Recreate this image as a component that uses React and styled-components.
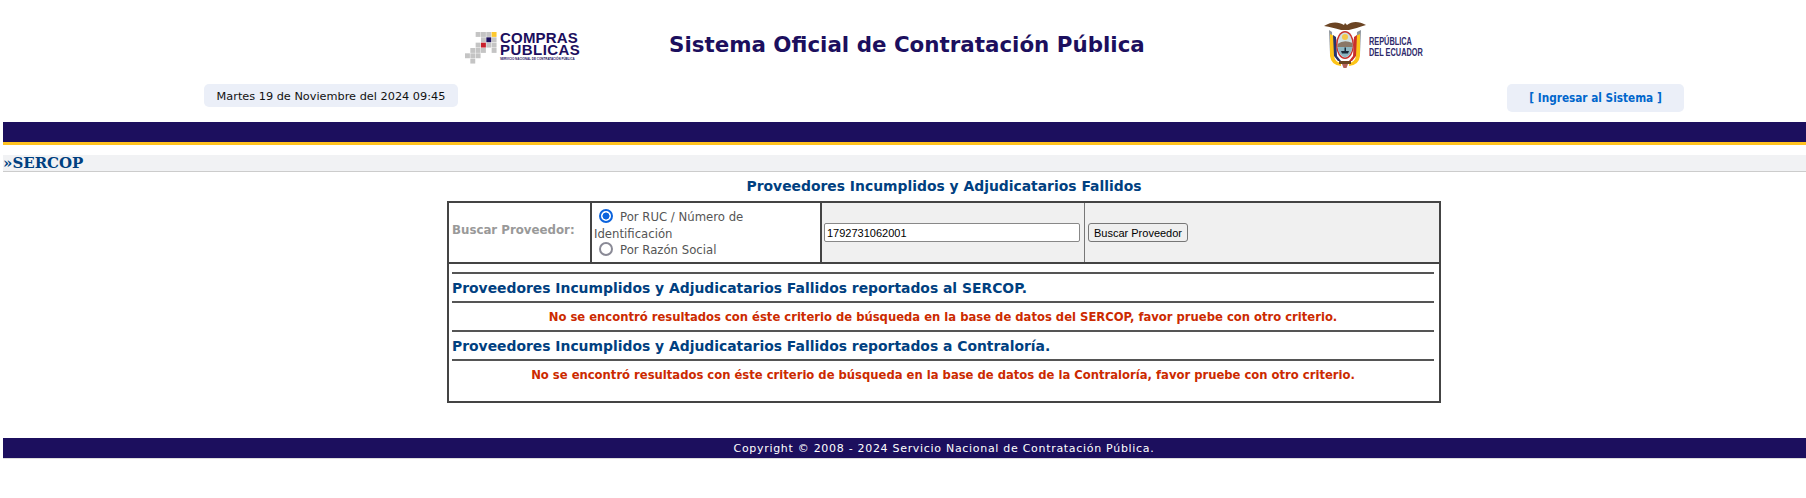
import React from "react";
import styled, { createGlobalStyle } from "styled-components";

const GlobalStyle = createGlobalStyle`
  html, body {
    margin: 0;
    padding: 0;
    background: #fff;
  }
  body {
    font-family: "DejaVu Sans", Verdana, sans-serif;
    overflow: hidden;
  }
`;

const Page = styled.div`
  margin-left: 3px;
`;

const TopRow = styled.div`
  display: grid;
  grid-template-columns: 666px 655px 1fr;
  height: 84px;
`;

const LogoCell = styled.div`
  display: flex;
  align-items: flex-start;
  padding-left: ${(props) => props.$inset || 0}px;
  padding-top: ${(props) => props.$top || 0}px;
`;

const LogoText = styled.div`
  margin-left: 3px;
  font-family: "Liberation Sans", Arial, sans-serif;
  font-weight: bold;
  color: #1c0f5e;
  white-space: nowrap;
`;

const LogoWord = styled.div`
  font-size: 15px;
  line-height: 12px;
  letter-spacing: ${(props) => props.$spacing}px;
`;

const LogoTagline = styled.div`
  font-size: 3px;
  line-height: 6px;
`;

const CrestText = styled.div`
  margin-left: 3px;
  padding-top: 16px;
  font-family: "Liberation Sans", Arial, sans-serif;
  font-size: 10.5px;
  font-weight: bold;
  line-height: 11px;
  color: #2e2a6b;
  white-space: nowrap;
  transform: scaleX(0.7);
  transform-origin: left top;
`;

const SiteTitle = styled.h1`
  margin: 0;
  padding-top: 29px;
  font-size: 21.4px;
  line-height: 32px;
  font-weight: bold;
  color: #1c0f5e;
  white-space: nowrap;
`;

const InfoRow = styled.div`
  display: flex;
  justify-content: space-between;
  align-items: flex-start;
  height: 38px;
  padding: 0 122px 0 201px;
`;

const DatePill = styled.div`
  width: 254px;
  height: 23px;
  box-sizing: border-box;
  background: #ebeff8;
  border-radius: 5px;
  font-size: 11.3px;
  line-height: 25px;
  text-align: center;
  color: #111;
`;

const LoginPill = styled.a`
  display: block;
  width: 177px;
  height: 28px;
  background: #ebeff8;
  border-radius: 5px;
  font-family: "DejaVu Sans Condensed", "DejaVu Sans", sans-serif;
  font-stretch: condensed;
  font-size: 11.7px;
  font-weight: bold;
  line-height: 28px;
  text-align: center;
  color: #0066cc;
  text-decoration: none;
`;

const Band = styled.div`
  height: 20px;
  background: #1c0f5e;
  border-bottom: 3px solid #ffc220;
`;

const SectionBar = styled.div`
  margin-top: 10px;
  height: 16px;
  background: #f1f2f4;
  border-bottom: 1px solid #cccccc;
  font-family: "DejaVu Serif", Georgia, serif;
  font-size: 15px;
  font-weight: bold;
  line-height: 16px;
  color: #004080;
`;

const Content = styled.div`
  width: 994px;
  margin-left: 444px;
`;

const PageHeading = styled.h2`
  margin: 0;
  height: 29px;
  font-size: 13.9px;
  line-height: 28px;
  font-weight: bold;
  text-align: center;
  color: #004080;
`;

const ResultBox = styled.div`
  box-sizing: border-box;
  height: 202px;
  border: 2px solid #444;
`;

const SearchRow = styled.div`
  display: grid;
  grid-template-columns: 141px 2px 228px 2px 262px 1px 1fr;
  height: 59px;
  border-bottom: 2px solid #444;
`;

const LabelCell = styled.div`
  display: flex;
  align-items: center;
  padding: 0 0 6px 3px;
  font-size: 11.8px;
  font-weight: bold;
  color: #999;
`;

const Rule = styled.div`
  background: ${(props) => props.$color || "#444"};
`;

const RadioCell = styled.div`
  padding: 6px 3px 0 2px;
  font-size: 11.7px;
  line-height: 16.5px;
  color: #555;
`;

const RadioLine = styled.label`
  display: block;
`;

const Radio = styled.input`
  appearance: none;
  box-sizing: border-box;
  width: 14px;
  height: 14px;
  margin: 0 7px 0 5px;
  vertical-align: -2px;
  border: 2px solid #8a8a96;
  border-radius: 50%;
  background: #fff;

  &:checked {
    border-color: #0b63dd;
    background: radial-gradient(circle, #0b63dd 0 3.2px, #fff 3.8px);
  }
`;

const FieldCell = styled.div`
  display: flex;
  align-items: flex-start;
  padding: 20px 2px 0 ${(props) => props.$inset}px;
  background: #f0f0f0;
`;

const ProviderInput = styled.input`
  box-sizing: border-box;
  width: 256px;
  height: 19px;
  padding: 0 2px;
  border: 1px solid #888;
  border-radius: 2px;
  background: #fff;
  font-family: "Liberation Sans", Arial, sans-serif;
  font-size: 11px;
  color: #000;
`;

const SearchButton = styled.button`
  box-sizing: border-box;
  width: 100px;
  height: 19px;
  padding: 0;
  border: 1px solid #777;
  border-radius: 3px;
  background: #efefef;
  font-family: "Liberation Sans", Arial, sans-serif;
  font-size: 11px;
  color: #000;
`;

const ResultArea = styled.div`
  padding: 8px 5px 0 3px;
`;

const Divider = styled.div`
  height: 2px;
  background: #555;
`;

const ResultTitle = styled.h3`
  margin: 0;
  height: 27px;
  font-size: 13.9px;
  font-weight: bold;
  line-height: 29px;
  color: #004080;
`;

const ErrorText = styled.p`
  margin: 0;
  height: 27px;
  font-size: 11.6px;
  font-weight: bold;
  line-height: 29px;
  text-align: center;
  color: #cc2a00;
`;

const Footer = styled.div`
  margin-top: 35px;
  height: 20px;
  background: #1c0f5e;
  border-bottom: 1px solid #ddd;
`;

const FooterText = styled.div`
  width: 994px;
  margin-left: 444px;
  font-size: 11px;
  line-height: 22px;
  letter-spacing: 0.7px;
  text-align: center;
  color: #fff;
`;

const SQUARES = [
  [2, 0], [3, 0], [4, 0], [3, 1], [5, 1], [2, 2], [4, 2], [5, 2],
  [1, 3], [2, 3], [3, 3], [5, 3], [0, 4], [1, 4], [2, 4], [1, 5],
];

const ComprasMark = () => (
  <svg width="32" height="32" viewBox="0 0 32 32">
    {SQUARES.map(([col, row]) => (
      <rect key={`${col}-${row}`} x={col * 5.33} y={row * 5.33} width="4.9" height="4.9" fill="#c4c4c4" />
    ))}
    <rect x="26.65" y="0" width="4.9" height="4.9" fill="#fdc82f" />
    <rect x="21.32" y="5.33" width="4.9" height="4.9" fill="#1c0f5e" />
    <rect x="15.99" y="10.66" width="4.9" height="4.9" fill="#c8202c" />
  </svg>
);

const EcuadorCrest = () => (
  <svg width="42" height="50" viewBox="0 0 42 50">
    <path d="M0 6 C8 1 15 2 20 5 L21 3 L23 5 C28 1 35 1 42 5 C35 7 30 9 25 10 L17 10 C11 8 6 7 0 6 Z" fill="#6b4423" />
    <path d="M5 10 L8 12 L9 34 L6 34 Z" fill="#8d949b" />
    <path d="M37 10 L33 12 L32 34 L36 34 Z" fill="#8d949b" />
    <path d="M6 14 L10 16 L10 36 Q11 42 17 43 L17 46 Q7 45 6 36 Z" fill="#fcc419" />
    <path d="M36 14 L32 16 L32 36 Q31 42 25 43 L25 46 Q35 45 36 36 Z" fill="#fcc419" />
    <path d="M9 15 L12 17 L13 36 L17 41 L14 41 L10 36 Z" fill="#24346e" />
    <path d="M33 15 L30 17 L29 36 L25 41 L28 41 L32 36 Z" fill="#c9302c" />
    <ellipse cx="21" cy="25" rx="9" ry="14" fill="#c9302c" />
    <ellipse cx="21" cy="25" rx="7.6" ry="12.4" fill="#cfe0e4" />
    <circle cx="21" cy="17" r="3" fill="#f3c64b" />
    <path d="M13.5 24 Q20 19 28.5 23 L28.6 27 L13.5 27 Z" fill="#8a7767" />
    <path d="M13.6 27 L28.4 27 Q27.5 35 21 37.4 Q14.5 35 13.6 27 Z" fill="#8db6c2" />
    <path d="M17 31 L25 31 L24 33.5 L18 33.5 Z M20.5 27.5 L22 27.5 L22 31 L20.5 31 Z" fill="#1a2a3a" />
    <rect x="15" y="41" width="12" height="3" fill="#6b4423" />
    <path d="M18 44 L24 44 L22.5 48 L19.5 48 Z" fill="#b3605a" />
  </svg>
);

const App = () => (
  <Page>
    <GlobalStyle />
    <TopRow>
      <LogoCell $inset={462} $top={32}>
        <ComprasMark />
        <LogoText>
          <LogoWord $spacing={0.2}>COMPRAS</LogoWord>
          <LogoWord $spacing={0.45}>PÚBLICAS</LogoWord>
          <LogoTagline>SERVICIO NACIONAL DE CONTRATACIÓN PÚBLICA</LogoTagline>
        </LogoText>
      </LogoCell>
      <SiteTitle>Sistema Oficial de Contratación Pública</SiteTitle>
      <LogoCell $top={20}>
        <EcuadorCrest />
        <CrestText>
          REPÚBLICA
          <br />
          DEL ECUADOR
        </CrestText>
      </LogoCell>
    </TopRow>
    <InfoRow>
      <DatePill>Martes 19 de Noviembre del 2024 09:45</DatePill>
      <LoginPill href="#">[ Ingresar al Sistema ]</LoginPill>
    </InfoRow>
    <Band />
    <SectionBar>»SERCOP</SectionBar>
    <Content>
      <PageHeading>Proveedores Incumplidos y Adjudicatarios Fallidos</PageHeading>
      <ResultBox>
        <SearchRow>
          <LabelCell>Buscar Proveedor:</LabelCell>
          <Rule />
          <RadioCell>
            <RadioLine>
              <Radio type="radio" name="criterio" defaultChecked />
              Por RUC / Número de Identificación
            </RadioLine>
            <RadioLine>
              <Radio type="radio" name="criterio" />
              Por Razón Social
            </RadioLine>
          </RadioCell>
          <Rule />
          <FieldCell $inset={2}>
            <ProviderInput defaultValue="1792731062001" />
          </FieldCell>
          <Rule $color="#777" />
          <FieldCell $inset={3}>
            <SearchButton>Buscar Proveedor</SearchButton>
          </FieldCell>
        </SearchRow>
        <ResultArea>
          <Divider />
          <ResultTitle>Proveedores Incumplidos y Adjudicatarios Fallidos reportados al SERCOP.</ResultTitle>
          <Divider />
          <ErrorText>No se encontró resultados con éste criterio de búsqueda en la base de datos del SERCOP, favor pruebe con otro criterio.</ErrorText>
          <Divider />
          <ResultTitle>Proveedores Incumplidos y Adjudicatarios Fallidos reportados a Contraloría.</ResultTitle>
          <Divider />
          <ErrorText>No se encontró resultados con éste criterio de búsqueda en la base de datos de la Contraloría, favor pruebe con otro criterio.</ErrorText>
        </ResultArea>
      </ResultBox>
    </Content>
    <Footer>
      <FooterText>Copyright © 2008 - 2024 Servicio Nacional de Contratación Pública.</FooterText>
    </Footer>
  </Page>
);

export default App;
